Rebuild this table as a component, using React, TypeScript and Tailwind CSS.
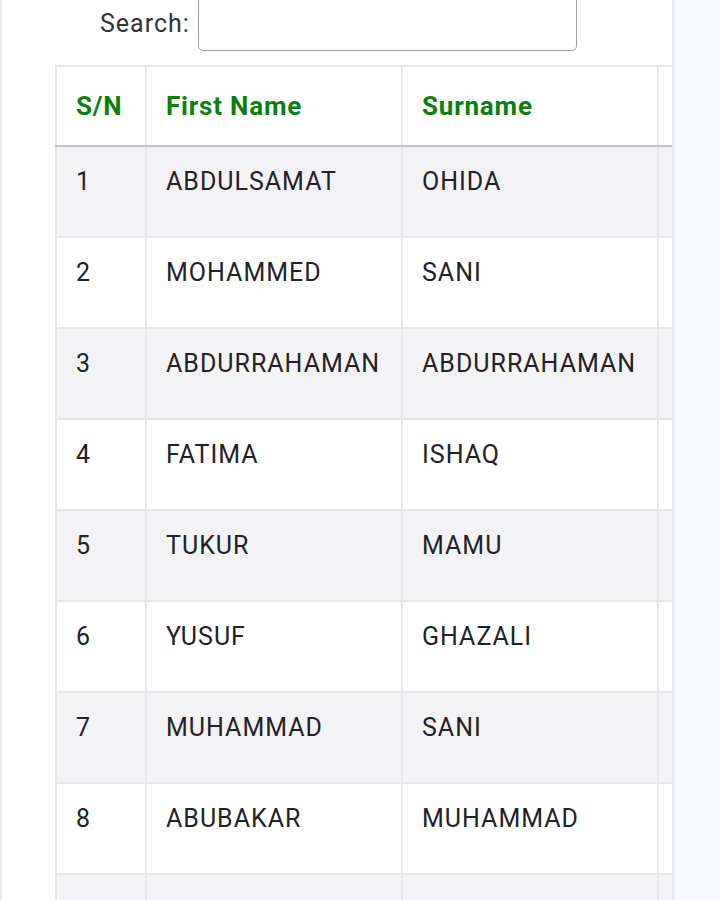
import React from "react";

const rows = [
  ["1", "ABDULSAMAT", "OHIDA"],
  ["2", "MOHAMMED", "SANI"],
  ["3", "ABDURRAHAMAN", "ABDURRAHAMAN"],
  ["4", "FATIMA", "ISHAQ"],
  ["5", "TUKUR", "MAMU"],
  ["6", "YUSUF", "GHAZALI"],
  ["7", "MUHAMMAD", "SANI"],
  ["8", "ABUBAKAR", "MUHAMMAD"],
  ["", "", ""],
];

export default function App() {
  return (
    <div
      className="flex w-[720px] h-[900px] overflow-hidden bg-[#f6f8fc] text-[#222226]"
      style={{ fontFamily: "Roboto, 'Liberation Sans', sans-serif" }}
    >
      <div className="w-[674px] shrink-0 h-full bg-white border-l-2 border-r-2 border-[#e9e9ed] overflow-hidden">
        <div className="flex items-center -mt-[4px] pl-[98px]">
          <span className="text-[25px] tracking-[1px] leading-none text-[#333]">Search:</span>
          <div className="ml-[8px] w-[379px] h-[55px] border border-[#9e9ea4] rounded-[5px] bg-white" />
        </div>
        <div className="mt-[14px] ml-[53px] overflow-hidden">
          <table className="border-collapse" style={{ width: 900, tableLayout: "fixed" }}>
            <colgroup>
              <col style={{ width: 90 }} />
              <col style={{ width: 256 }} />
              <col style={{ width: 256 }} />
              <col style={{ width: 298 }} />
            </colgroup>
            <thead>
              <tr className="h-[80px]">
                {["S/N", "First Name", "Surname", ""].map((h, i) => (
                  <th
                    key={i}
                    className="border-2 border-[#e6e6ea] border-b-[#c4c4c8] text-left align-middle pl-[19px] text-[26px] tracking-[0.8px] font-bold text-[#0a800f] leading-6"
                  >
                    {h}
                  </th>
                ))}
              </tr>
            </thead>
            <tbody>
              {rows.map((r, idx) => (
                <tr key={idx} className={idx % 2 === 0 ? "bg-[#f3f2f5] h-[91px]" : "bg-white h-[91px]"}>
                  {[...r, ""].map((c, i) => (
                    <td
                      key={i}
                      className="border-2 border-[#e6e6ea] align-top pt-[23px] pl-[19px] text-[25px] tracking-[1px] leading-6 whitespace-nowrap"
                    >
                      {c}
                    </td>
                  ))}
                </tr>
              ))}
            </tbody>
          </table>
        </div>
      </div>
      <div className="flex-1 h-full bg-[#f5f8fd] border-l border-[#f0f0f6]" />
    </div>
  );
}
